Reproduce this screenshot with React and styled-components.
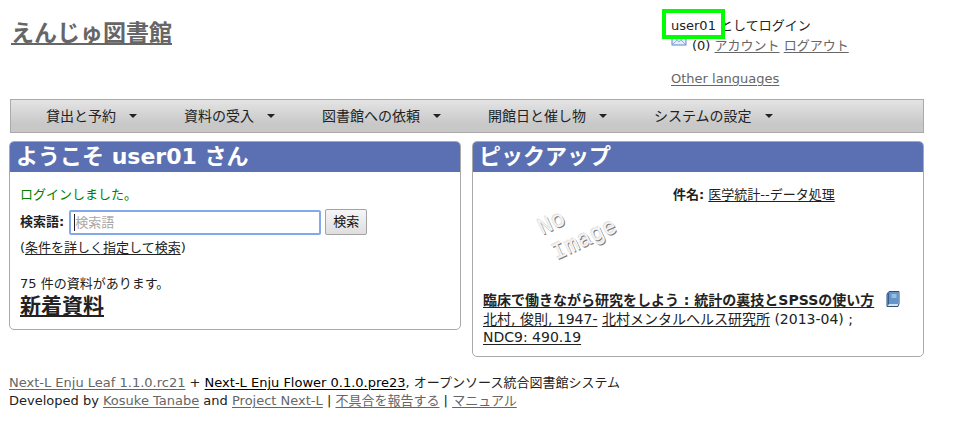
import React from "react";
import styled, { createGlobalStyle } from "styled-components";

const GlobalStyle = createGlobalStyle`
  * { box-sizing: border-box; }
  body {
    margin: 0;
    background: #fff;
    color: #222;
    font: 13px/18px "DejaVu Sans", "Noto Sans CJK JP", sans-serif;
  }
  h1, h2, h3, p, ul { margin: 0; padding: 0; }
`;

const Page = styled.div`
  padding: 0 34px 16px 9px;
`;

const Link = styled.a`
  color: ${(p) => p.$color || "#222"};
  text-decoration: underline;
  text-underline-offset: 2px;
`;

const Header = styled.header`
  display: grid;
  grid-template-columns: 1fr 253px;
  height: 99px;
  padding-top: 16px;
`;

const SiteTitle = styled.h1`
  padding: 0 2px;
  font-size: 23px;
  line-height: 34px;
`;

const Account = styled.div`
  line-height: 20px;
`;

const AccountLine = styled.p`
  height: 20px;
  white-space: nowrap;
`;

const Languages = styled.p`
  margin-top: 13px;
`;

const UserName = styled.span`
  position: relative;
  z-index: 1;
  display: inline-block;

  &::before {
    content: "";
    position: absolute;
    z-index: -1;
    inset: -7px -9px -3px -9px;
    border: 4px solid #0f0;
    background: #fff;
  }
`;

const MailIcon = styled.svg`
  width: 16px;
  height: 16px;
  margin-right: 5px;
  vertical-align: top;
  margin-top: -5px;
`;

const Nav = styled.nav`
  margin-left: 1px;
  border: 1px solid #aaa;
  background: linear-gradient(#e4e4e4, #c8c8c8 75%);
`;

const Menu = styled.ul`
  display: flex;
  list-style: none;
`;

const MenuButton = styled.button`
  display: flex;
  align-items: center;
  gap: 13px;
  height: 32px;
  padding: 0 12px 0 35px;
  border: 0;
  background: none;
  color: #222;
  font: inherit;
  font-size: 14px;
  white-space: nowrap;

  &::after {
    content: "";
    border: 4px solid transparent;
    border-top-color: #222;
    border-bottom: 0;
  }
`;

const Columns = styled.main`
  display: grid;
  grid-template-columns: 1fr 1fr;
  align-items: start;
  gap: 11px;
  margin-top: 8px;
`;

const Panel = styled.section`
  overflow: hidden;
  border: 1px solid #aaa;
  border-radius: 5px;
`;

const PanelTitle = styled.h2`
  height: 30px;
  padding: 0 6px;
  background: #5a70b2;
  color: #fff;
  font-size: 22px;
  line-height: 30px;
  white-space: nowrap;
`;

const PanelBody = styled.div`
  padding: 14px 10px 10px;
`;

const Notice = styled.p`
  color: #008000;
`;

const SearchForm = styled.form`
  display: flex;
  align-items: center;
  margin: 5px 0 4px;
`;

const SearchLabel = styled.label`
  margin-right: 5px;
  font-weight: bold;
`;

const SearchInput = styled.input`
  width: 252px;
  height: 25px;
  padding: 0 4px;
  border: 2px solid #84a9e8;
  border-radius: 2px;
  background: linear-gradient(#222, #222) 3px center / 1px 17px no-repeat #fff;
  color: #222;
  font: inherit;
  outline: 0;

  &::placeholder { color: #a9a9a9; }
`;

const SearchButton = styled.button`
  width: 42px;
  height: 26px;
  margin-left: 4px;
  padding: 0;
  border: 1px solid #a3a3a3;
  border-radius: 2px;
  background: linear-gradient(#f6f6f6, #dedede);
  color: #111;
  font: inherit;
`;

const Count = styled.p`
  margin-top: 18px;
`;

const NewItems = styled.h3`
  font-size: 21px;
  line-height: 26px;
`;

const Pickup = styled.div`
  display: grid;
  grid-template-columns: 190px 1fr;
  height: 104px;
`;

const Cover = styled.svg`
  display: block;
  width: 180px;
  height: 90px;
`;

const Book = styled.div`
  font-size: 14px;
`;

const BookTitle = styled.h3`
  font-size: 14px;
  line-height: 20px;
  white-space: nowrap;
`;

const BookIcon = styled.svg`
  width: 16px;
  height: 18px;
  margin-left: 6px;
  vertical-align: -3px;
`;

const Footer = styled.footer`
  margin-top: 17px;
`;

const menus = ["貸出と予約", "資料の受入", "図書館への依頼", "開館日と催し物", "システムの設定"];

const NoImage = () => (
  <Cover viewBox="0 0 180 90" role="img" aria-label="No Image">
    {[
      { o: -1, c: "#e2e2e2" },
      { o: 1, c: "#7c7c7c" },
      { o: 0, c: "#f4f4f4" },
    ].map(({ o, c }) => (
      <g key={o} fill={c} fontFamily="Liberation Mono, monospace" fontSize="23">
        <text transform={`translate(${59 + o} ${49 + o}) rotate(-25)`}>No</text>
        <text transform={`translate(${73 + o} ${74 + o}) rotate(-25)`}>Image</text>
      </g>
    ))}
  </Cover>
);

export default function App() {
  return (
    <>
      <GlobalStyle />
      <Page>
        <Header>
          <SiteTitle><Link href="#" $color="#666">えんじゅ図書館</Link></SiteTitle>
          <Account>
            <AccountLine><UserName>user01</UserName> としてログイン</AccountLine>
            <AccountLine>
              <MailIcon viewBox="0 0 16 16" aria-hidden="true">
                <rect x="1" y="2" width="14" height="12" fill="#e3effc" stroke="#5d87c9" />
                <path d="M2 4 8 11l6-7M2 13l4-4M14 13l-4-4" fill="none" stroke="#8fb0dd" />
              </MailIcon>
              (0) <Link href="#" $color="#666">アカウント</Link>{" "}
              <Link href="#" $color="#666">ログアウト</Link>
            </AccountLine>
            <Languages><Link href="#" $color="#666">Other languages</Link></Languages>
          </Account>
        </Header>
        <Nav>
          <Menu>
            {menus.map((m) => <li key={m}><MenuButton type="button">{m}</MenuButton></li>)}
          </Menu>
        </Nav>
        <Columns>
          <Panel>
            <PanelTitle>ようこそ user01 さん</PanelTitle>
            <PanelBody>
              <Notice>ログインしました。</Notice>
              <SearchForm>
                <SearchLabel htmlFor="query">検索語:</SearchLabel>
                <SearchInput id="query" type="text" placeholder="検索語" />
                <SearchButton type="submit">検索</SearchButton>
              </SearchForm>
              <p>(<Link href="#">条件を詳しく指定して検索</Link>)</p>
              <Count>75 件の資料があります。</Count>
              <NewItems><Link href="#">新着資料</Link></NewItems>
            </PanelBody>
          </Panel>
          <Panel>
            <PanelTitle>ピックアップ</PanelTitle>
            <PanelBody>
              <Pickup>
                <NoImage />
                <p><b>件名:</b> <Link href="#">医学統計--データ処理</Link></p>
              </Pickup>
              <Book>
                <BookTitle>
                  <Link href="#">臨床で働きながら研究をしよう : 統計の裏技とSPSSの使い方</Link>{" "}
                  <BookIcon viewBox="0 0 16 18" aria-hidden="true">
                    <path d="M4 1.500h10v12l-1 3H2V4z" fill="#d7e2ee" stroke="#2f5278" />
                    <path d="M4 2h9.500v12H4z" fill="#6495c8" />
                    <path d="M2.500 4 4 2v12l-1.500 2z" fill="#315f94" />
                    <path d="M6.500 5h5M6.500 7h5" stroke="#d3e4f5" />
                  </BookIcon>
                </BookTitle>
                <p>
                  <Link href="#">北村, 俊則, 1947-</Link> <Link href="#">北村メンタルヘルス研究所</Link> (2013-04) ;
                </p>
                <p><Link href="#">NDC9: 490.19</Link></p>
              </Book>
            </PanelBody>
          </Panel>
        </Columns>
        <Footer>
          <p>
            <Link href="#" $color="#666">Next-L Enju Leaf 1.1.0.rc21</Link> +{" "}
            <Link href="#" $color="#000">Next-L Enju Flower 0.1.0.pre23</Link>, オープンソース統合図書館システム
          </p>
          <p>
            Developed by <Link href="#" $color="#666">Kosuke Tanabe</Link> and{" "}
            <Link href="#" $color="#666">Project Next-L</Link> |{" "}
            <Link href="#" $color="#666">不具合を報告する</Link> |{" "}
            <Link href="#" $color="#666">マニュアル</Link>
          </p>
        </Footer>
      </Page>
    </>
  );
}
